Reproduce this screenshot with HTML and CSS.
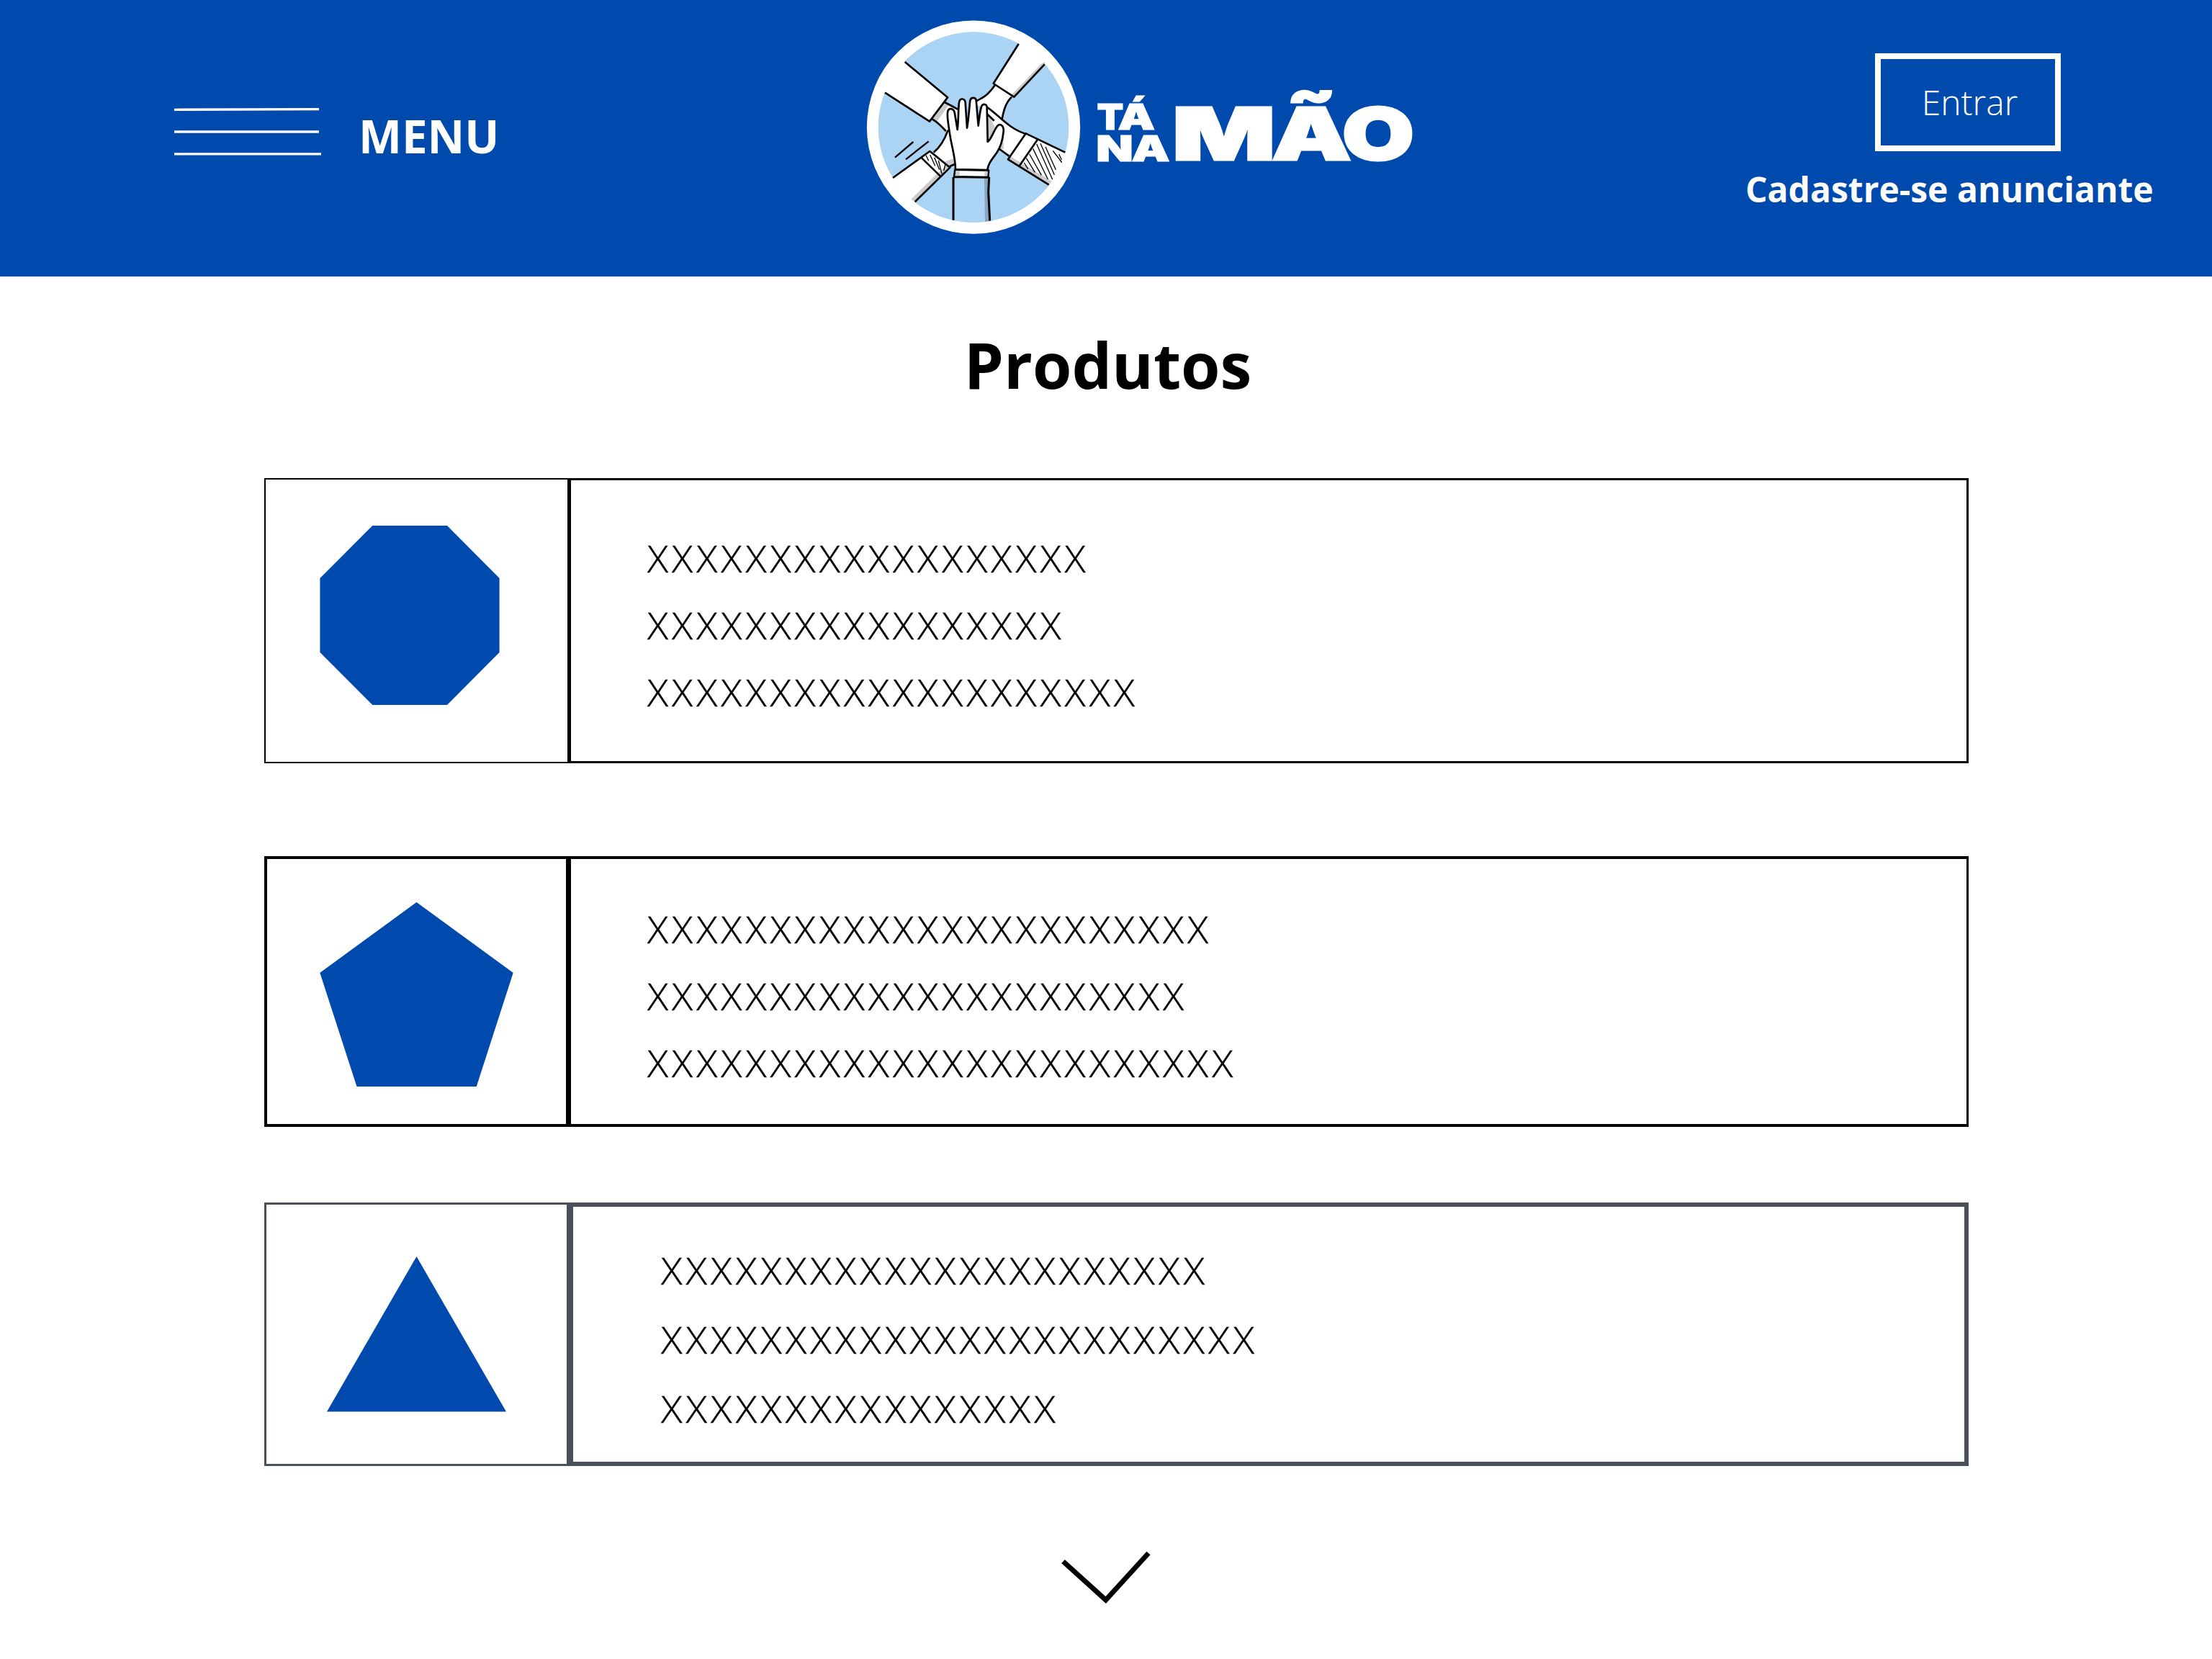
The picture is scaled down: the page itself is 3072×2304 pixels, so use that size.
FILE: index.html
```html
<!DOCTYPE html>
<html lang="pt-BR">
<head>
<meta charset="utf-8">
<title>Tá na Mão - Produtos</title>
<link rel="stylesheet" href="styles.css">
</head>
<body>
<header class="header">
  <nav class="menu">
    <svg class="menu-lines" width="204" height="68" viewBox="0 0 204 68" stroke="#fff" stroke-width="3.3">
      <path d="M0 4.3 L201 3.7 M0 35 H201 M0 65.8 H204"/>
    </svg>
    <span class="menu-label">MENU</span>
  </nav>

  <svg class="logo" width="790" height="330" viewBox="0 0 790 330">
    <defs>
      <clipPath id="disc"><circle cx="486" cy="500" r="397"/></clipPath>
      <clipPath id="ring"><circle cx="486" cy="500" r="444"/></clipPath>
    </defs>
    <g transform="scale(.33333)" stroke-linecap="butt" stroke-linejoin="round">
      <circle cx="486" cy="500" r="444.500" fill="#fff"/>
      <circle cx="486" cy="500" r="397" fill="#abd3f3"/>
      <g fill="#fff" clip-path="url(#ring)">
        <!-- upper right arm -->
        <path d="M571 318 L674 153 L760 120 L830 200 L782 238 L655 374Z"/>
        <path d="M766 238 L782 228 L786 240 L655 374 L640 370Z" fill="#cbcbcd"/>
        <path d="M575 325 C545 370 515 383 480 400 L545 425 L605 470 C610 430 620 398 645 372Z"/>
        <!-- upper left arm -->
        <path d="M200 228 L378 376 L303 476 L117 356 L70 300 L150 190Z"/>
        <path d="M368 398 L430 430 L400 520 L375 518 L316 466Z"/>
        <path d="M368 398 L385 404 L334 476 L316 466Z" fill="#cbcbcd"/>
        <!-- right arm -->
        <path d="M540 415 C590 450 630 505 704 528 L634 620 L590 590 L540 560Z"/>
        <path d="M704 526 L868 605 L895 640 L830 745 L800 740 L630 634Z"/>
        <path d="M630 634 L640 622 L812 725 L800 740Z M540 430 L575 500 L548 560Z M612 510 C612 545 609 565 612 592 L590 588Z" fill="#cbcbcd"/>
        <!-- lower left arm -->
        <path d="M380 512 C368 545 352 580 320 605 L385 662 L408 654 L420 560Z"/>
        <path d="M362 644 L410 628 V652 L388 666Z" fill="#cbcbcd"/>
        <path d="M304 600 L388 668 L242 811 L190 815 L110 730 L150 711Z"/>
        <path d="M376 658 L388 668 L242 811 L226 800 L334 694Z" fill="#cbcbcd"/>
      </g>
      <g fill="none" stroke="#000" stroke-width="8">
        <path d="M200 228 L378 376 L303 476 L117 356"/>
        <path d="M366 396 L422 426 M314 466 C340 482 356 499 371 516"/>
        <path d="M674 153 L569 318 L655 374 L782 238"/>
        <path d="M575 325 C548 366 524 378 500 390 M645 374 C616 402 610 440 604 470"/>
        <path d="M540 415 C590 447 630 505 704 528 M545 447 L572 473 M590 588 L634 620"/>
        <path d="M868 605 L704 526 L630 634 L800 740 M752 553 L678 660"/>
        <path d="M380 512 C368 545 352 580 320 605 M386 664 L408 654"/>
        <path d="M150 711 L304 600 L388 668 L242 811 M270 628 L350 706"/>
        <path d="M159 626 L235 561 M204 634 L299 559" stroke-width="7"/>
      </g>
      <!-- knitted cuff and striped sleeve -->
      <path d="M288 617 L299 640 M305 615 L326 661 M323 626 L344 677 M340 639 L354 694 M368 657 L362 681" stroke="#000" stroke-width="4" fill="none"/>
      <path d="M765 568 L823 698 M749 570 L815 718 M734 590 L796 717 M719 612 L769 700 M706 629 L742 688 M697 648 L713 674 M786 582 L829 677 M817 598 L855 648 M842 612 L853 636" stroke="#000" stroke-width="4" fill="none" clip-path="url(#disc)"/>
      <!-- front arm -->
      <path d="M402 708 H551 L555 891 Q480 900 400 887Z" fill="#abd3f3"/>
      <path d="M531 710 H551 L555 891 L534 894Z" fill="#86a5bf"/>
      <path d="M402 887 V708 M551 708 L548 770 L554 890" fill="none" stroke="#000" stroke-width="9"/>
      <path d="M411 676 C411 625 393 575 386 520 C380 480 374 450 379 433 C384 418 402 421 407 438 L419 510 C424 470 422 425 426 396 C429 378 449 378 452 397 L459 503 C466 465 468 420 472 388 C476 374 494 374 497 388 L506 494 C510 465 511 440 519 414 C525 400 541 403 542 417 L545 561 C562 548 572 508 587 493 C601 483 613 497 611 518 C608 548 601 580 583 606 C565 632 547 650 544 678Z" fill="#fff" stroke="#000" stroke-width="8"/>
      <path d="M409 677 L549 680 L547 709 L405 706Z" fill="#fff" stroke="#000" stroke-width="8"/>
      <path d="M413 681 H428 V703 H410Z M532 683 H545 L543 705 H532Z" fill="#cbcbcd"/>
      <path d="M402 708 H551" stroke="#000" stroke-width="8"/>
    </g>
    <g class="logo-text">
      <text class="logo-small" y="169.600"><tspan x="333.500" textLength="36.800" lengthAdjust="spacingAndGlyphs">T</tspan><tspan x="362.500" textLength="51.500" lengthAdjust="spacingAndGlyphs">Á</tspan></text>
      <text class="logo-small" y="213.500"><tspan x="332.200" textLength="51.500" lengthAdjust="spacingAndGlyphs">N</tspan><tspan x="381.500" textLength="53.100" lengthAdjust="spacingAndGlyphs">A</tspan></text>
      <text class="logo-big" y="211.500"><tspan x="438" textLength="143.500" lengthAdjust="spacingAndGlyphs">M</tspan><tspan x="576.300" textLength="110.400" lengthAdjust="spacingAndGlyphs">Ã</tspan><tspan x="674" textLength="99.900" lengthAdjust="spacingAndGlyphs">O</tspan></text>
    </g>
  </svg>

  <div class="account">
    <button class="login">Entrar</button>
    <a class="signup">Cadastre-se anunciante</a>
  </div>
</header>

<main class="products">
  <h1 class="title">Produtos</h1>

  <article class="card card-first">
    <div class="thumb">
      <svg width="250" height="249" viewBox="0 0 250 249" fill="#004aad"><path d="M73.300 0 H177 L249.600 73 V176 L177 249 H73.300 L.4 176 V73Z"/></svg>
    </div>
    <div class="info">
      <p>XXXXXXXXXXXXXXXXXX</p>
      <p>XXXXXXXXXXXXXXXXX</p>
      <p>XXXXXXXXXXXXXXXXXXXX</p>
    </div>
  </article>

  <article class="card card-second">
    <div class="thumb">
      <svg width="269" height="256" viewBox="0 0 269 256" fill="#004aad"><path d="M134.500 0 L268.700 98 L217.700 256 H51.500 L.3 98Z"/></svg>
    </div>
    <div class="info">
      <p>XXXXXXXXXXXXXXXXXXXXXXX</p>
      <p>XXXXXXXXXXXXXXXXXXXXXX</p>
      <p>XXXXXXXXXXXXXXXXXXXXXXXX</p>
    </div>
  </article>

  <article class="card card-third">
    <div class="thumb">
      <svg width="249" height="216" viewBox="0 0 249 216" fill="#004aad"><path d="M124.500 0 L249 215.600 H0Z"/></svg>
    </div>
    <div class="info">
      <p>XXXXXXXXXXXXXXXXXXXXXX</p>
      <p>XXXXXXXXXXXXXXXXXXXXXXXX</p>
      <p>XXXXXXXXXXXXXXXX</p>
    </div>
  </article>

  <svg class="more" width="126" height="76" viewBox="0 0 126 76" fill="none" stroke="#000" stroke-width="7"><path d="M3.500 14.500 L62.700 68 L122 3"/></svg>
</main>
</body>
</html>
```
FILE: styles.css
```css
* {
  box-sizing: border-box;
  margin: 0;
  padding: 0;
}

body {
  width: 3072px;
  height: 2304px;
  overflow: hidden;
  background: #fff;
  color: #000;
  font-family: "Open Sans", "Noto Sans", sans-serif;
}

.header {
  display: flex;
  align-items: flex-start;
  height: 384px;
  background: #004aad;
  color: #fff;
}

.menu {
  display: flex;
  align-items: flex-start;
  width: 1190px;
  padding: 148px 0 0 242px;
  gap: 52px;
}

.menu-label {
  padding-top: 1px;
  font-size: 63.6px;
  font-weight: 700;
  line-height: 80px;
}

.logo {
  display: block;
  flex: none;
  margin-top: 10px;
}

.logo-text {
  font-family: Inter, "Open Sans", sans-serif;
  font-weight: 900;
  fill: #fff;
  stroke: #fff;
}

.logo-small {
  font-size: 48.8px;
  stroke-width: 1.2px;
}

.logo-big {
  font-size: 100.7px;
  stroke-width: 3px;
}

.account {
  display: flex;
  flex-direction: column;
  padding: 74px 0 0 444px;
}

.login {
  width: 258px;
  height: 136px;
  margin-left: 180px;
  padding: 0 0 1px 5px;
  border: 8px solid #fff;
  background: none;
  color: #fff;
  font: 300 48px/60px "Open Sans", "Noto Sans", sans-serif;
}

.signup {
  margin-top: 23px;
  font-size: 48px;
  font-weight: 700;
  line-height: 60px;
  white-space: nowrap;
}

.products {
  display: flex;
  flex-direction: column;
  padding: 62px 338px 0 367px;
}

.title {
  align-self: center;
  margin-left: -24px;
  font-size: 88px;
  font-weight: 700;
  line-height: 120px;
}

.card {
  --line: #000;
  display: grid;
  grid-template-columns: 423px 1944px;
}

.thumb {
  border: 3px solid var(--line);
}

.thumb svg {
  display: block;
}

.info {
  padding-left: 106px;
  border: 3px solid var(--line);
  font-size: 51.3px;
  font-weight: 300;
  letter-spacing: 4.74px;
  line-height: 93px;
}

.info p {
  transform: scaleX(1.055);
  transform-origin: left;
  -webkit-text-stroke: 0.4px currentColor;
}

.card-first {
  height: 396px;
  margin-top: 98px;
}

.card-first .thumb {
  padding: 64px 0 0 75px;
  border-width: 2px;
}

.card-first .info {
  padding-top: 62px;
}

.card-second {
  height: 376px;
  margin-top: 129px;
}

.card-second .thumb {
  padding: 60px 0 0 73px;
  border-width: 4px;
}

.card-second .info {
  padding-top: 51px;
  border-width: 4px 3px;
}

.card-third {
  --line: #4a4f59;
  height: 366px;
  margin-top: 105px;
}

.card-third .thumb {
  padding: 72px 0 0 84px;
}

.card-third .info {
  padding: 40px 0 0 122px;
  border-width: 6px;
  font-size: 52px;
  letter-spacing: 4.79px;
  line-height: 96px;
}

.more {
  align-self: flex-start;
  margin: 118px 0 0 1106px;
}
```
